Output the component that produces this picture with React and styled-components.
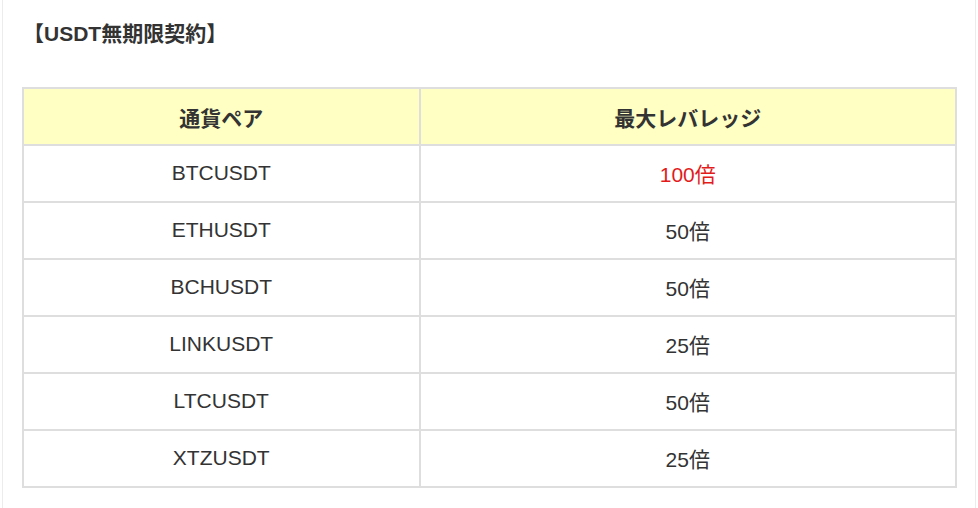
import styled, { createGlobalStyle } from 'styled-components'

const GlobalStyle = createGlobalStyle`
  body {
    margin: 0;
    background: #ffffff;
    font-family: "Liberation Sans", "Noto Sans CJK JP", sans-serif;
    color: #333;
  }
`

const rows = [
  { pair: 'BTCUSDT', lev: '100倍', hot: true },
  { pair: 'ETHUSDT', lev: '50倍' },
  { pair: 'BCHUSDT', lev: '50倍' },
  { pair: 'LINKUSDT', lev: '25倍' },
  { pair: 'LTCUSDT', lev: '50倍' },
  { pair: 'XTZUSDT', lev: '25倍' },
]

const App = () => {
  return (
    <>
      <GlobalStyle />
      <Card>
        <Title>【USDT無期限契約】</Title>
        <Table>
          <thead>
            <tr>
              <HeadCell>通貨ペア</HeadCell>
              <HeadCell>最大レバレッジ</HeadCell>
            </tr>
          </thead>
          <tbody>
            {rows.map((row) => (
              <tr key={row.pair}>
                <Cell>{row.pair}</Cell>
                <Cell $hot={row.hot}>{row.lev}</Cell>
              </tr>
            ))}
          </tbody>
        </Table>
      </Card>
    </>
  )
}

const Card = styled.section`
  margin: 0 2px;
  min-height: 508px;
  box-sizing: border-box;
  border-left: 1px solid #ececec;
  border-right: 1px solid #ececec;
  padding: 20px 18px 0 19px;
`

const Title = styled.h3`
  margin: 0 0 39px 0;
  padding-left: 1px;
  font-size: 21px;
  font-weight: bold;
  line-height: 28px;
  color: #333;
`

const Table = styled.table`
  width: 100%;
  border-collapse: collapse;
  table-layout: fixed;
  border: 2px solid #dedede;
`

const HeadCell = styled.th`
  height: 57px;
  padding: 0;
  box-sizing: border-box;
  background: #ffffc4;
  border: 2px solid #dedede;
  font-size: 21px;
  font-weight: bold;
  color: #333;
  text-align: center;
  &:first-child {
    width: 42.5%;
  }
`

const Cell = styled.td`
  height: 57px;
  padding: 0 0 2px 0;
  box-sizing: border-box;
  border: 2px solid #dedede;
  font-size: 21px;
  text-align: center;
  color: ${({ $hot }) => ($hot ? '#e21b1b' : '#333')};
`

export default App
